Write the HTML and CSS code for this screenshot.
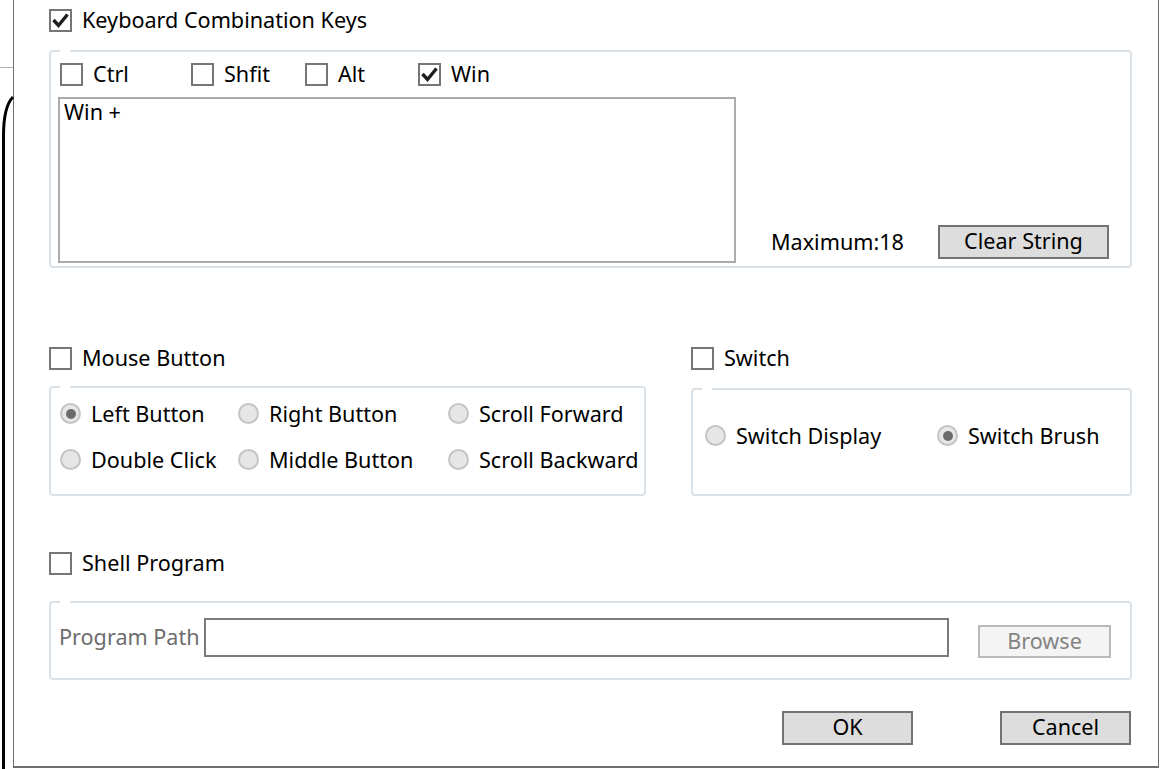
FILE: index.html
```html
<!DOCTYPE html>
<html lang="en">
<head>
<meta charset="utf-8">
<title>Key Settings</title>
<link rel="stylesheet" href="styles.css">
</head>
<body>
<svg class="backwin" width="14" height="769" viewBox="0 0 14 769" aria-hidden="true">
  <line x1="0" y1="67.5" x2="13" y2="67.5" stroke="#b4b4b4" stroke-width="1"/>
  <path d="M13 97 C7 103 3.5 114 3.5 136 L3.5 769" fill="none" stroke="#000" stroke-width="3"/>
</svg>
<div class="dialog">
  <div class="chk">
    <span class="box on"><svg width="19" height="19" viewBox="0 0 19 19"><path d="M2.5 9 L7.5 14.5 L16.5 3.5" fill="none" stroke="#1e1e1e" stroke-width="3.4"/></svg></span>
    <span class="lbl">Keyboard Combination Keys</span>
  </div>

  <div class="group kb">
    <div class="kb-left">
      <div class="keys">
        <div class="chk"><span class="box"></span><span class="lbl">Ctrl</span></div>
        <div class="chk"><span class="box"></span><span class="lbl">Shfit</span></div>
        <div class="chk"><span class="box"></span><span class="lbl">Alt</span></div>
        <div class="chk"><span class="box on"><svg width="19" height="19" viewBox="0 0 19 19"><path d="M2.5 9 L7.5 14.5 L16.5 3.5" fill="none" stroke="#1e1e1e" stroke-width="3.4"/></svg></span><span class="lbl">Win</span></div>
      </div>
      <div class="textbox">Win +</div>
    </div>
    <div class="kb-right">
      <span class="max">Maximum:18</span>
      <span class="btn clear">Clear String</span>
    </div>
  </div>

  <div class="mid">
    <div class="col">
      <div class="chk"><span class="box"></span><span class="lbl">Mouse Button</span></div>
      <div class="group mouse">
        <div class="radio"><span class="dot on"></span><span>Left Button</span></div>
        <div class="radio"><span class="dot"></span><span>Right Button</span></div>
        <div class="radio"><span class="dot"></span><span>Scroll Forward</span></div>
        <div class="radio"><span class="dot"></span><span>Double Click</span></div>
        <div class="radio"><span class="dot"></span><span>Middle Button</span></div>
        <div class="radio"><span class="dot"></span><span>Scroll Backward</span></div>
      </div>
    </div>
    <div class="col">
      <div class="chk"><span class="box"></span><span class="lbl">Switch</span></div>
      <div class="group switch">
        <div class="radio"><span class="dot"></span><span>Switch Display</span></div>
        <div class="radio"><span class="dot on"></span><span>Switch Brush</span></div>
      </div>
    </div>
  </div>

  <div class="chk shell-head"><span class="box"></span><span class="lbl">Shell Program</span></div>
  <div class="group shell">
    <span class="plabel">Program Path</span>
    <span class="pinput"></span>
    <span class="btn browse">Browse</span>
  </div>

  <div class="footer">
    <span class="btn">OK</span>
    <span class="btn">Cancel</span>
  </div>
</div>
</body>
</html>
```

FILE: styles.css
```css
* { box-sizing: border-box; }
html, body { margin: 0; padding: 0; background: #fff; }
body {
  width: 1160px;
  height: 769px;
  overflow: hidden;
  position: relative;
  font-family: "Noto Sans", "Open Sans", sans-serif;
  font-size: 21.6px;
  color: #000;
}
.backwin { position: absolute; left: 0; top: 0; }

.dialog {
  margin-left: 13px;
  width: 1146px;
  height: 768px;
  border-left: 1px solid #6f6f6f;
  border-right: 1px solid #6f6f6f;
  border-bottom: 2px solid #6f6f6f;
  padding: 9px 26px 0 35px;
}

.chk {
  display: flex;
  align-items: center;
  gap: 10px;
  height: 23px;
  line-height: 23px;
  white-space: nowrap;
}
.chk .lbl { padding-bottom: 2px; }
.box {
  width: 23px;
  height: 23px;
  flex: none;
  border: 2px solid #767676;
  background: #fff;
  display: flex;
  align-items: center;
  justify-content: center;
}

.group {
  position: relative;
  border: 2px solid #dae2e8;
  border-radius: 4px;
}
.group::before {
  content: "";
  position: absolute;
  top: -2px;
  left: 9px;
  width: 10px;
  height: 2px;
  background: #fff;
}

/* keyboard group */
.kb {
  margin-top: 18px;
  height: 218px;
  padding: 11px 0 3px 7px;
  display: flex;
}
.kb-left { width: 678px; flex: none; }
.keys {
  margin-left: 2px;
  display: grid;
  grid-template-columns: 131px 114px 113px auto;
}
.textbox {
  margin-top: 11px;
  height: 166px;
  border: 2px solid #ababab;
  padding: 0 4px;
  line-height: 25px;
}
.kb-right {
  flex: 1;
  align-self: flex-end;
  margin-bottom: 4px;
  padding: 0 21px 0 35px;
  display: flex;
  align-items: center;
  justify-content: space-between;
}
.max { padding-bottom: 2px; }

.btn {
  display: flex;
  align-items: center;
  justify-content: center;
  width: 131px;
  height: 34px;
  padding-bottom: 2px;
  background: #dddddd;
  border: 2px solid #737373;
  line-height: 1;
}
.btn.clear { width: 171px; }

/* middle */
.mid {
  margin-top: 79px;
  display: grid;
  grid-template-columns: 597px 441px;
  column-gap: 45px;
  align-items: start;
}
.radio {
  display: flex;
  align-items: center;
  gap: 10px;
  height: 30px;
  padding-bottom: 1px;
  white-space: nowrap;
}
.dot {
  width: 21px;
  height: 21px;
  flex: none;
  border-radius: 50%;
  background: #e6e6e6;
  border: 2px solid #c4c4c4;
  display: flex;
  align-items: center;
  justify-content: center;
}
.dot.on::after {
  content: "";
  width: 10px;
  height: 10px;
  border-radius: 50%;
  background: #6b6b6b;
}
.mouse {
  margin-top: 16px;
  height: 110px;
  padding: 11px 0 0 9px;
  display: grid;
  grid-template-columns: 178px 210px auto;
  grid-template-rows: 30px 30px;
  row-gap: 16px;
}
.switch {
  margin-top: 18px;
  height: 108px;
  padding: 31px 0 0 12px;
  display: grid;
  grid-template-columns: 232px auto;
  grid-template-rows: 30px;
}

/* shell */
.shell-head { margin-top: 56px; }
.shell {
  margin-top: 26px;
  height: 79px;
  padding: 15px 0 0 8px;
  display: flex;
  align-items: flex-start;
}
.plabel {
  width: 145px;
  flex: none;
  height: 39px;
  line-height: 37px;
  color: #6d6d6d;
  white-space: nowrap;
}
.pinput {
  width: 745px;
  height: 39px;
  flex: none;
  border: 2px solid #7a7a7a;
  background: #fff;
}
.btn.browse {
  margin: 7px 0 0 29px;
  width: 133px;
  height: 33px;
  background: #f4f4f4;
  border-color: #b9b9b9;
  color: #838383;
}

.footer {
  margin-top: 31px;
  margin-right: 1px;
  display: flex;
  justify-content: flex-end;
  gap: 87px;
}
```
